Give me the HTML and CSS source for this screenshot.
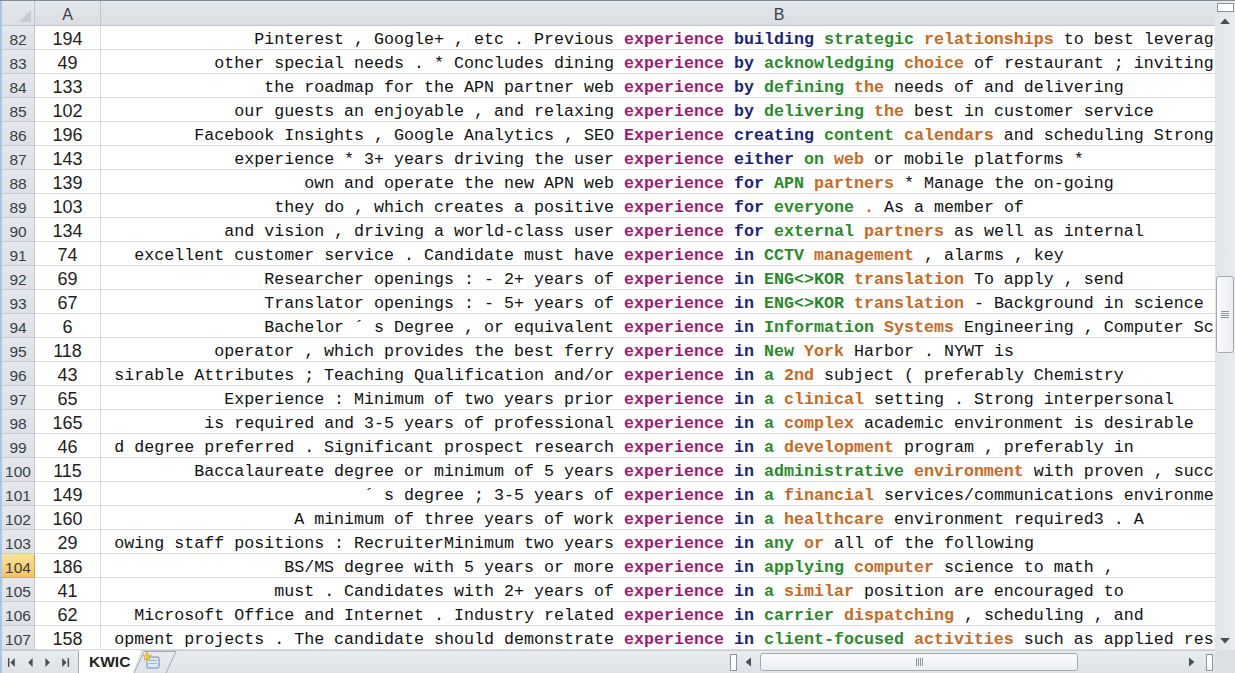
FILE: index.html
```html
<!DOCTYPE html>
<html>
<head>
<meta charset="utf-8">
<title>KWIC</title>
<link rel="stylesheet" href="styles.css">
</head>
<body>
<div class="app">
  <div class="left">
    <div class="grid">
      <div class="hdr">
        <div class="rh corner"><svg width="14" height="14" viewBox="0 0 14 14"><polygon points="13,1 13,13 1,13" fill="#c6cbd2"/></svg></div>
        <div class="ca hcell">A</div>
        <div class="hcell hb"><span class="hbl">B</span></div>
      </div>
      <div class="row"><div class="rh">82</div><div class="ca">194</div><div class="cb"><span class="lc">Pinterest , Google+ , etc . Previous</span><span class="rc"> <b class="k">experience</b> <b class="w1">building</b> <b class="w2">strategic</b> <b class="w3">relationships</b> to best leverage our</span></div></div>
      <div class="row"><div class="rh">83</div><div class="ca">49</div><div class="cb"><span class="lc">other special needs . * Concludes dining</span><span class="rc"> <b class="k">experience</b> <b class="w1">by</b> <b class="w2">acknowledging</b> <b class="w3">choice</b> of restaurant ; inviting</span></div></div>
      <div class="row"><div class="rh">84</div><div class="ca">133</div><div class="cb"><span class="lc">the roadmap for the APN partner web</span><span class="rc"> <b class="k">experience</b> <b class="w1">by</b> <b class="w2">defining</b> <b class="w3">the</b> needs of and delivering</span></div></div>
      <div class="row"><div class="rh">85</div><div class="ca">102</div><div class="cb"><span class="lc">our guests an enjoyable , and relaxing</span><span class="rc"> <b class="k">experience</b> <b class="w1">by</b> <b class="w2">delivering</b> <b class="w3">the</b> best in customer service</span></div></div>
      <div class="row"><div class="rh">86</div><div class="ca">196</div><div class="cb"><span class="lc">Facebook Insights , Google Analytics , SEO</span><span class="rc"> <b class="k">Experience</b> <b class="w1">creating</b> <b class="w2">content</b> <b class="w3">calendars</b> and scheduling Strong</span></div></div>
      <div class="row"><div class="rh">87</div><div class="ca">143</div><div class="cb"><span class="lc">experience * 3+ years driving the user</span><span class="rc"> <b class="k">experience</b> <b class="w1">either</b> <b class="w2">on</b> <b class="w3">web</b> or mobile platforms *</span></div></div>
      <div class="row"><div class="rh">88</div><div class="ca">139</div><div class="cb"><span class="lc">own and operate the new APN web</span><span class="rc"> <b class="k">experience</b> <b class="w1">for</b> <b class="w2">APN</b> <b class="w3">partners</b> * Manage the on-going</span></div></div>
      <div class="row"><div class="rh">89</div><div class="ca">103</div><div class="cb"><span class="lc">they do , which creates a positive</span><span class="rc"> <b class="k">experience</b> <b class="w1">for</b> <b class="w2">everyone</b> <b class="w3">.</b> As a member of</span></div></div>
      <div class="row"><div class="rh">90</div><div class="ca">134</div><div class="cb"><span class="lc">and vision , driving a world-class user</span><span class="rc"> <b class="k">experience</b> <b class="w1">for</b> <b class="w2">external</b> <b class="w3">partners</b> as well as internal</span></div></div>
      <div class="row"><div class="rh">91</div><div class="ca">74</div><div class="cb"><span class="lc">excellent customer service . Candidate must have</span><span class="rc"> <b class="k">experience</b> <b class="w1">in</b> <b class="w2">CCTV</b> <b class="w3">management</b> , alarms , key</span></div></div>
      <div class="row"><div class="rh">92</div><div class="ca">69</div><div class="cb"><span class="lc">Researcher openings : - 2+ years of</span><span class="rc"> <b class="k">experience</b> <b class="w1">in</b> <b class="w2">ENG&lt;&gt;KOR</b> <b class="w3">translation</b> To apply , send</span></div></div>
      <div class="row"><div class="rh">93</div><div class="ca">67</div><div class="cb"><span class="lc">Translator openings : - 5+ years of</span><span class="rc"> <b class="k">experience</b> <b class="w1">in</b> <b class="w2">ENG&lt;&gt;KOR</b> <b class="w3">translation</b> - Background in science</span></div></div>
      <div class="row"><div class="rh">94</div><div class="ca">6</div><div class="cb"><span class="lc">Bachelor ´ s Degree , or equivalent</span><span class="rc"> <b class="k">experience</b> <b class="w1">in</b> <b class="w2">Information</b> <b class="w3">Systems</b> Engineering , Computer Science</span></div></div>
      <div class="row"><div class="rh">95</div><div class="ca">118</div><div class="cb"><span class="lc">operator , which provides the best ferry</span><span class="rc"> <b class="k">experience</b> <b class="w1">in</b> <b class="w2">New</b> <b class="w3">York</b> Harbor . NYWT is</span></div></div>
      <div class="row"><div class="rh">96</div><div class="ca">43</div><div class="cb"><span class="lc">sirable Attributes ; Teaching Qualification and/or</span><span class="rc"> <b class="k">experience</b> <b class="w1">in</b> <b class="w2">a</b> <b class="w3">2nd</b> subject ( preferably Chemistry</span></div></div>
      <div class="row"><div class="rh">97</div><div class="ca">65</div><div class="cb"><span class="lc">Experience : Minimum of two years prior</span><span class="rc"> <b class="k">experience</b> <b class="w1">in</b> <b class="w2">a</b> <b class="w3">clinical</b> setting . Strong interpersonal</span></div></div>
      <div class="row"><div class="rh">98</div><div class="ca">165</div><div class="cb"><span class="lc">is required and 3-5 years of professional</span><span class="rc"> <b class="k">experience</b> <b class="w1">in</b> <b class="w2">a</b> <b class="w3">complex</b> academic environment is desirable</span></div></div>
      <div class="row"><div class="rh">99</div><div class="ca">46</div><div class="cb"><span class="lc">d degree preferred . Significant prospect research</span><span class="rc"> <b class="k">experience</b> <b class="w1">in</b> <b class="w2">a</b> <b class="w3">development</b> program , preferably in</span></div></div>
      <div class="row"><div class="rh">100</div><div class="ca">115</div><div class="cb"><span class="lc">Baccalaureate degree or minimum of 5 years</span><span class="rc"> <b class="k">experience</b> <b class="w1">in</b> <b class="w2">administrative</b> <b class="w3">environment</b> with proven , successful</span></div></div>
      <div class="row"><div class="rh">101</div><div class="ca">149</div><div class="cb"><span class="lc">´ s degree ; 3-5 years of</span><span class="rc"> <b class="k">experience</b> <b class="w1">in</b> <b class="w2">a</b> <b class="w3">financial</b> services/communications environment</span></div></div>
      <div class="row"><div class="rh">102</div><div class="ca">160</div><div class="cb"><span class="lc">A minimum of three years of work</span><span class="rc"> <b class="k">experience</b> <b class="w1">in</b> <b class="w2">a</b> <b class="w3">healthcare</b> environment required3 . A</span></div></div>
      <div class="row"><div class="rh">103</div><div class="ca">29</div><div class="cb"><span class="lc">owing staff positions : RecruiterMinimum two years</span><span class="rc"> <b class="k">experience</b> <b class="w1">in</b> <b class="w2">any</b> <b class="w3">or</b> all of the following</span></div></div>
      <div class="row"><div class="rh active">104</div><div class="ca">186</div><div class="cb"><span class="lc">BS/MS degree with 5 years or more</span><span class="rc"> <b class="k">experience</b> <b class="w1">in</b> <b class="w2">applying</b> <b class="w3">computer</b> science to math ,</span></div></div>
      <div class="row"><div class="rh">105</div><div class="ca">41</div><div class="cb"><span class="lc">must . Candidates with 2+ years of</span><span class="rc"> <b class="k">experience</b> <b class="w1">in</b> <b class="w2">a</b> <b class="w3">similar</b> position are encouraged to</span></div></div>
      <div class="row"><div class="rh">106</div><div class="ca">62</div><div class="cb"><span class="lc">Microsoft Office and Internet . Industry related</span><span class="rc"> <b class="k">experience</b> <b class="w1">in</b> <b class="w2">carrier</b> <b class="w3">dispatching</b> , scheduling , and</span></div></div>
      <div class="row"><div class="rh">107</div><div class="ca">158</div><div class="cb"><span class="lc">opment projects . The candidate should demonstrate</span><span class="rc"> <b class="k">experience</b> <b class="w1">in</b> <b class="w2">client-focused</b> <b class="w3">activities</b> such as applied research</span></div></div>
    </div>
    <div class="bottom">
      <div class="nav">
        <svg width="77" height="22" viewBox="0 0 77 22">
          <g fill="#4a4f57">
            <rect x="6" y="7" width="1.5" height="9"/>
            <polygon points="13,7 13,16 8.5,11.5"/>
            <polygon points="31,7 31,16 26.5,11.5"/>
            <polygon points="44,7 44,16 48.5,11.5"/>
            <polygon points="61,7 61,16 65.5,11.5"/>
            <rect x="66.5" y="7" width="1.5" height="9"/>
          </g>
        </svg>
      </div>
      <div class="tab">KWIC</div>
      <div class="newtab">
        <svg width="46" height="22" viewBox="0 0 46 22">
          <polyline points="0,22 10,0.5 42,0.5 32,22" fill="none" stroke="#a2a9b3" stroke-width="1"/>
          <rect x="13" y="6" width="12" height="11" rx="1" fill="#dbe8f6" stroke="#6d8fb8" stroke-width="1"/>
          <rect x="15" y="9" width="8" height="1" fill="#9fb7d4"/>
          <rect x="15" y="12" width="8" height="1" fill="#9fb7d4"/>
          <polygon points="13,1 14.3,4 17.5,4.3 15,6.3 15.8,9.5 13,7.8 10.2,9.5 11,6.3 8.5,4.3 11.7,4" fill="#f5c542" stroke="#d99a1a" stroke-width="0.6"/>
        </svg>
      </div>
      <div class="spacer"></div>
      <div class="hscroll">
        <div class="hsplit"></div>
        <div class="hbtn"><svg width="8" height="10" viewBox="0 0 8 10"><polygon points="7,0.5 7,9.5 1.5,5" fill="#4a4f57"/></svg></div>
        <div class="hthumb"><span class="grip"></span></div>
        <div class="htrack"></div>
        <div class="hbtn"><svg width="8" height="10" viewBox="0 0 8 10"><polygon points="1,0.5 1,9.5 6.5,5" fill="#4a4f57"/></svg></div>
        <div class="hsplit r"></div>
      </div>
    </div>
  </div>
  <div class="vscroll">
    <div class="vsplit"></div>
    <div class="vbtn"><svg width="12" height="8" viewBox="0 0 12 8"><polygon points="1,7 11,7 6,1.5" fill="#4a4f57"/></svg></div>
    <div class="vtrack"><div class="vthumb"><span class="vgrip"></span></div></div>
    <div class="vbtn"><svg width="12" height="8" viewBox="0 0 12 8"><polygon points="1,1 11,1 6,6.5" fill="#4a4f57"/></svg></div>
    <div class="vcorner"></div>
  </div>
</div>
</body>
</html>
```

FILE: styles.css
```css
* { box-sizing: border-box; }
html, body { margin: 0; padding: 0; }
body {
  width: 1235px;
  height: 673px;
  overflow: hidden;
  background: #ffffff;
  font-family: "Liberation Sans", Arial, sans-serif;
}
.app {
  display: flex;
  height: 673px;
  border-top: 1px solid #858b93;
}
.left {
  width: 1215px;
  display: flex;
  flex-direction: column;
  border-left: 2px solid #a9c6e8;
}
.grid {
  height: 649px;
  overflow: hidden;
}
.hdr {
  display: flex;
  height: 25px;
  background: linear-gradient(#e4e7eb, #dadee3);
  border-bottom: 1px solid #c1c6cd;
}
.row {
  display: flex;
  height: 24px;
  border-bottom: 1px solid #dadcdf;
}
.rh {
  width: 33px;
  flex-shrink: 0;
  background: linear-gradient(#e4e7eb, #dde1e6);
  border-right: 1px solid #c1c6cd;
  color: #3b3f45;
  font-size: 15.5px;
  line-height: 27px;
  text-align: center;
}
.row .rh {
  border-bottom: 1px solid #c8ccd2;
  height: 24px;
  margin-bottom: -1px;
  overflow: hidden;
}
.rh.corner {
  display: flex;
  align-items: flex-end;
  justify-content: flex-end;
  padding: 0 2px 2px 0;
}
.rh.active {
  background: linear-gradient(#fbe39a, #f3c65a);
  border-right-color: #c9a24c;
  border-bottom-color: #d2ae5e;
  color: #3b3f45;
}
.ca {
  width: 66px;
  flex-shrink: 0;
  border-right: 1px solid #dadcdf;
  color: #1e1e1e;
  font-size: 18px;
  line-height: 27px;
  text-align: center;
  overflow: hidden;
}
.hcell {
  border-right: 1px solid #c1c6cd;
  color: #3b3f45;
  font-size: 16px;
  line-height: 27px;
}
.hb {
  flex: 1;
  min-width: 0;
  overflow: hidden;
  border-right: none;
}
.hbl {
  display: block;
  width: 1356px;
  text-align: center;
}
.cb {
  flex: 1;
  display: flex;
  overflow: hidden;
  white-space: pre;
  padding-left: 12px;
  font-family: "Liberation Mono", "Courier New", monospace;
  font-size: 16.67px;
  line-height: 27px;
  color: #111111;
}
.lc {
  width: 501px;
  flex-shrink: 0;
  text-align: right;
  overflow: hidden;
}
.rc { flex-shrink: 0; }
.cb b { font-weight: bold; }
.k { color: #a3186f; }
.w1 { color: #1b1f80; }
.w2 { color: #2a8a2a; }
.w3 { color: #c9691f; }

.bottom {
  height: 23px;
  display: flex;
  align-items: stretch;
  background: linear-gradient(#e9ecef, #dfe2e6);
  border-top: 1px solid #c8ccd2;
}
.nav {
  width: 77px;
  flex-shrink: 0;
  display: flex;
  align-items: center;
  border-right: 1px solid #a2a9b3;
}
.tab {
  width: 62px;
  flex-shrink: 0;
  background: #ffffff;
  clip-path: polygon(0 0, 100% 0, 54px 100%, 0 100%);
  font-weight: bold;
  font-size: 15.5px;
  line-height: 23px;
  color: #222;
  padding-left: 10px;
  margin-top: -1px;
}
.newtab {
  width: 46px;
  flex-shrink: 0;
  margin-left: -7px;
  display: flex;
  align-items: flex-end;
}
.spacer { flex: 1; }
.hscroll {
  width: 487px;
  flex-shrink: 0;
  display: flex;
  align-items: center;
  padding: 0 2px;
}
.hsplit {
  width: 7px;
  height: 17px;
  background: #ffffff;
  border: 1px solid #8d949e;
}
.hsplit.r { margin-left: 3px; }
.hbtn {
  width: 22px;
  height: 17px;
  display: flex;
  align-items: center;
  justify-content: center;
}
.hthumb {
  width: 318px;
  height: 18px;
  border: 1px solid #a3aab4;
  border-radius: 3px;
  background: linear-gradient(#fbfbfc, #eceef1);
  display: flex;
  align-items: center;
  justify-content: center;
  margin-left: 1px;
}
.grip {
  width: 7px;
  height: 8px;
  background: repeating-linear-gradient(90deg, #8d949e 0 1px, transparent 1px 2px);
}
.htrack { flex: 1; }

.vscroll {
  width: 20px;
  display: flex;
  flex-direction: column;
  align-items: center;
  background: linear-gradient(90deg, #e2e5e9, #e9ebee);
}
.vsplit {
  width: 17px;
  height: 9px;
  margin-top: 2px;
  background: #ffffff;
  border: 1px solid #8d949e;
}
.vbtn {
  width: 18px;
  height: 18px;
  display: flex;
  align-items: center;
  justify-content: center;
}
.vtrack {
  flex: 1;
  width: 18px;
  padding-top: 246px;
}
.vthumb {
  width: 18px;
  height: 77px;
  border: 1px solid #a3aab4;
  border-radius: 3px;
  background: linear-gradient(90deg, #fbfbfc, #eceef1);
  display: flex;
  align-items: center;
  justify-content: center;
}
.vgrip {
  width: 8px;
  height: 7px;
  background: repeating-linear-gradient(180deg, #8d949e 0 1px, transparent 1px 2px);
}
.vcorner {
  width: 20px;
  height: 23px;
  background: #dcdfe3;
}
```
